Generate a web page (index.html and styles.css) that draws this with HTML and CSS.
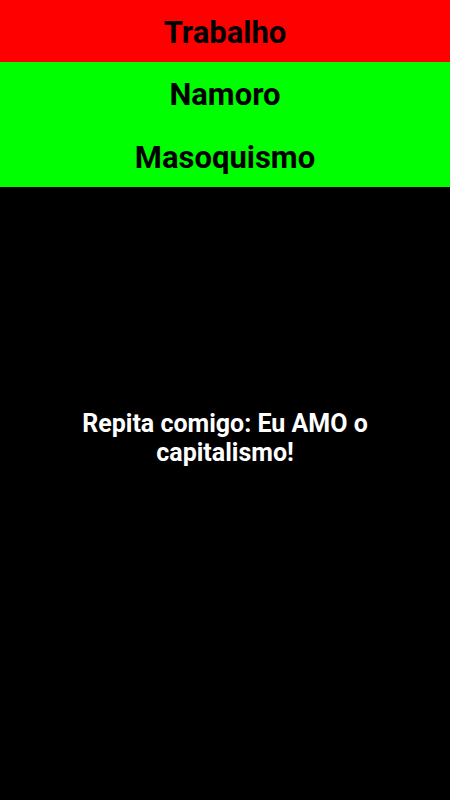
FILE: index.html
```html
<!DOCTYPE html>
<html lang="pt">
<head>
<meta charset="utf-8">
<title>Tópicos</title>
<link rel="stylesheet" href="styles.css">
</head>
<body>
<div class="screen">
  <div class="topic topic-red">Trabalho</div>
  <div class="topic topic-green">Namoro</div>
  <div class="topic topic-green">Masoquismo</div>
  <div class="message">Repita comigo: Eu AMO o capitalismo!</div>
</div>
</body>
</html>
```
FILE: styles.css
```css
html, body {
  margin: 0;
  padding: 0;
  background: #000;
}
.screen {
  width: 450px;
  height: 800px;
  display: flex;
  flex-direction: column;
  background: #000;
  font-family: Roboto, "Noto Sans", sans-serif;
  font-weight: 700;
}
.topic {
  height: 62.5px;
  display: flex;
  align-items: center;
  justify-content: center;
  font-size: 31px;
  color: #000;
  padding-top: 3px;
  box-sizing: border-box;
}
.topic-red {
  height: 62px;
  background: #ff0000;
}
.topic-green {
  background: #00ff00;
}
.message {
  margin-top: 222px;
  padding: 0 60px;
  color: #fff;
  text-align: center;
  font-size: 25px;
  line-height: 29px;
}
```
